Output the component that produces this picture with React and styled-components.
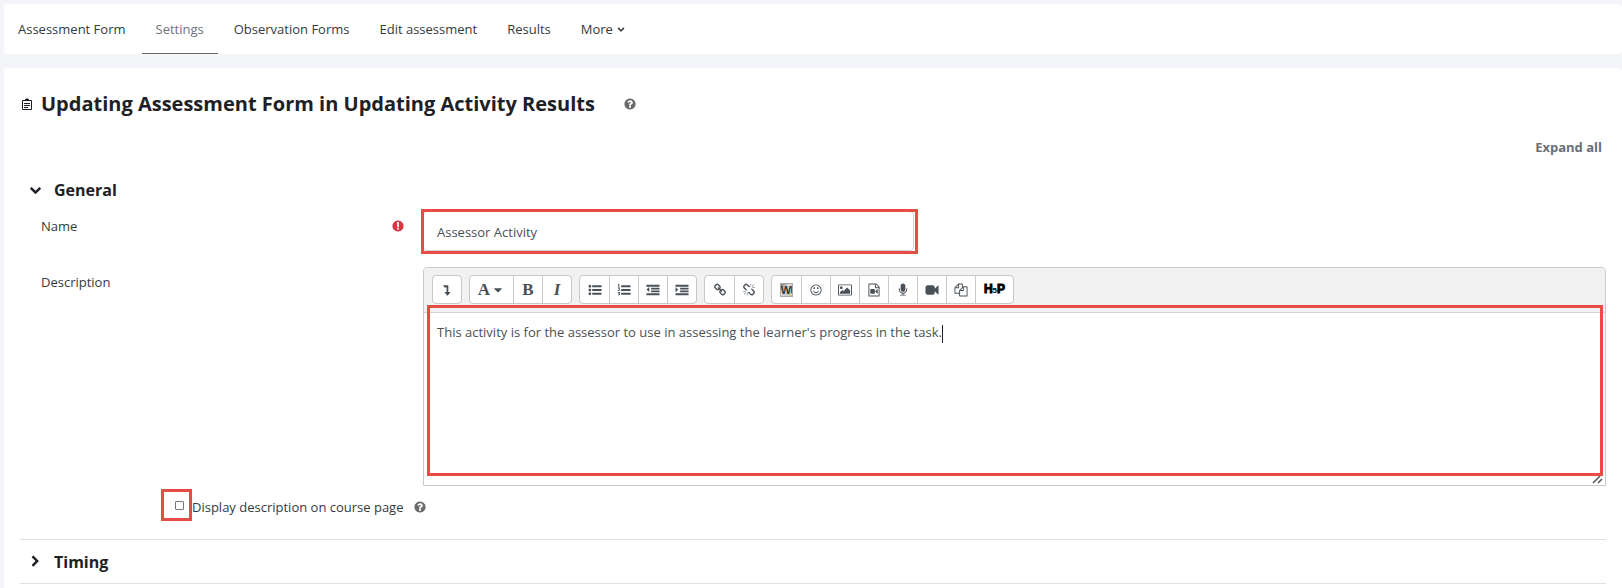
import React, { useState } from "react";
import styled, { createGlobalStyle, css } from "styled-components";

const GlobalStyle = createGlobalStyle`
  * {
    box-sizing: border-box;
  }

  body {
    margin: 0;
    background: #f4f5f8;
    color: #343a40;
    font-family: "Open Sans", "Noto Sans", sans-serif;
    font-size: 13px;
    line-height: 20px;
  }
`;

const Page = styled.div`
  display: flex;
  flex-direction: column;
  gap: 14px;
  min-height: 100vh;
  padding: 4px 0 0 4px;
`;

const TabBar = styled.nav`
  display: flex;
  gap: 2px;
  height: 50px;
  background: #fff;
  border-radius: 4px;
`;

const Tab = styled.a`
  display: flex;
  align-items: center;
  gap: 4px;
  padding: 0 14px;
  border-bottom: 1px solid ${(props) => (props.$active ? "#6a6a6c" : "transparent")};
  color: ${(props) => (props.$active ? "#6f7379" : "#343a40")};
  text-decoration: none;
`;

const Card = styled.main`
  flex: 1;
  padding: 22px 16px 0;
  background: #fff;
  border-radius: 4px 4px 0 0;
`;

const TitleRow = styled.header`
  display: flex;
  align-items: center;
  gap: 8px;
  padding-left: 1px;
`;

const Title = styled.h2`
  margin: 0 20px 0 0;
  color: #1d2125;
  font-size: 20px;
  font-weight: 700;
  line-height: 28px;
`;

const HelpButton = styled.button`
  display: flex;
  padding: 0;
  border: 0;
  background: none;
  color: #6a6a6c;
`;

const ExpandRow = styled.div`
  display: flex;
  justify-content: flex-end;
  padding: 19px 4px 0 0;
`;

const ExpandLink = styled.a`
  color: #6a6f76;
  font-weight: 700;
  text-decoration: none;
`;

const SectionHeader = styled.button`
  display: flex;
  align-items: center;
  gap: 12px;
  width: 100%;
  height: 43px;
  padding: 0 0 0 9px;
  border: 0;
  background: none;
  color: #1d2125;
  font: 700 16px/24px "Open Sans", "Noto Sans", sans-serif;
  text-align: left;
`;

const General = styled.section`
  padding-top: 11px;
`;

const Collapsed = styled.section`
  border: solid #dee2e6;
  border-width: 1px 0;
`;

const FieldRow = styled.div`
  display: grid;
  grid-template-columns: 382px 1fr;
  padding-left: 21px;

  & + & {
    margin-top: 16px;
  }
`;

const LabelCell = styled.div`
  display: flex;
  align-items: center;
  justify-content: space-between;
  align-self: start;
  padding: 5px 18px 0 0;
`;

const Required = styled.span`
  display: flex;
  color: #dc3545;
`;

const highlight = css`
  &::after {
    content: "";
    position: absolute;
    border: 3px solid #e94b45;
    pointer-events: none;
  }
`;

const NameBox = styled.div`
  position: relative;
  width: 491px;
  max-width: 100%;
  ${highlight}

  &::after {
    inset: -2px -4px -3px -2px;
  }
`;

const TextInput = styled.input`
  display: block;
  width: 100%;
  height: 40px;
  padding: 1px 13px 0;
  border: 1px solid #ced4da;
  border-radius: 4px;
  outline: 0;
  color: #495057;
  font: inherit;
`;

const Editor = styled.div`
  border: 1px solid #c8ccd0;
  border-radius: 4px 4px 0 0;
`;

const Toolbar = styled.div`
  display: flex;
  flex-wrap: wrap;
  gap: 7px;
  padding: 7px 8px 8px;
  border-bottom: 1px solid #ced4da;
  border-radius: 3px 3px 0 0;
  background: #f1f1f1;
`;

const ToolGroup = styled.div`
  display: flex;
  border: 1px solid #c8c8c8;
  border-radius: 4px;
  background: #fff;
`;

const Tool = styled.button`
  display: flex;
  align-items: center;
  justify-content: center;
  gap: 1px;
  width: ${(props) => props.$width || 29}px;
  height: 27px;
  padding: 0;
  border: 0;
  background: none;
  color: #495057;

  & + & {
    border-left: 1px solid #c8c8c8;
  }
`;

const Letter = styled.span`
  font-family: "Liberation Serif", serif;
  font-size: 17px;
  font-weight: 700;
  font-style: ${(props) => (props.$italic ? "italic" : "normal")};
`;

const H5P = styled.span`
  color: #000;
  font: 700 12px/12px "Liberation Sans", sans-serif;
  -webkit-text-stroke: 1px #000;

  small {
    font-size: 8px;
    -webkit-text-stroke: 0;
  }
`;

const EditorBody = styled.div`
  position: relative;
  ${highlight}

  &::after {
    inset: -8px 2px 9px 3px;
  }
`;

const TextArea = styled.div`
  min-height: 172px;
  padding: 9px 13px;
  outline: 0;
  color: #495057;
`;

const Caret = styled.span`
  display: inline-block;
  width: 1px;
  height: 18px;
  background: #1d2125;
  vertical-align: middle;
`;

const ResizeGrip = styled.svg`
  position: absolute;
  right: 2px;
  bottom: 1px;
`;

const CheckRow = styled.div`
  display: flex;
  align-items: center;
  gap: 8px;
  padding: 3px 0 18px 141px;
`;

const CheckLabel = styled.label`
  display: flex;
  align-items: center;
`;

const CheckBox = styled.span`
  position: relative;
  display: flex;
  align-items: center;
  width: 31px;
  height: 32px;
  padding-left: 14px;
  ${highlight}

  &::after {
    inset: 0;
  }
`;

const CheckText = styled.span`
  padding-top: 4px;
`;

const CheckHelp = styled(HelpButton)`
  padding: 4px 0 0 2px;
`;

const Check = styled.input`
  appearance: none;
  width: 9px;
  height: 9px;
  margin: 0;
  border: 1px solid #767676;
  border-radius: 1px;
  background: #fff;

  &:checked {
    background: #495057;
  }
`;

const circle =
  "M1664 896q0 209-103 385.500t-279.500 279.500-385.500 103-385.500-103-279.500-279.500-103-385.500 103-385.500 279.500-279.500 385.500-103 385.500 103 279.500 279.500 103 385.500z";

const paths = {
  help: `M1024 1376v-192q0-14-9-23t-23-9h-192q-14 0-23 9t-9 23v192q0 14 9 23t23 9h192q14 0 23-9t9-23zm256-672q0-88-55.500-163t-138.500-116-170-41q-243 0-371 213-15 24 8 42l132 100q7 6 19 6 16 0 25-12 53-68 86-92 34-24 86-24 48 0 85.500 26t37.500 59q0 38-20 61t-68 45q-63 28-115.500 86.500t-52.500 125.500v36q0 14 9 23t23 9h192q14 0 23-9t9-23q0-19 21.500-49.500t54.500-49.500q32-18 49-28.500t46-35 44.500-48 28-60.500 12.500-81z${circle}`,
  required: `M768 340h256l-24 700h-208zM784 1150h224v230h-224z${circle}`,
  chevronDown: "M1683 808l-742 741q-19 19-45 19t-45-19l-742-741q-19-19-19-45.500t19-45.500l166-165q19-19 45-19t45 19l531 531 531-531q19-19 45-19t45 19l166 165q19 19 19 45.500t-19 45.500z",
  chevronRight: "M1363 877l-742 742q-19 19-45 19t-45-19l-166-166q-19-19-19-45t19-45l531-531-531-531q-19-19-19-45t19-45l166-166q19-19 45-19t45 19l742 742q19 19 19 45t-19 45z",
  caret: "M1408 704q0 26-19 45l-448 448q-19 19-45 19t-45-19l-448-448q-19-19-19-45t19-45 45-19h896q26 0 45 19t19 45z",
  levelDown: "M400 256h620q60 0 60 60v860h240q60 0 24 48l-344 440q-40 44-80 0l-344-440q-36-48 24-48h240v-640h-260q-20 0-34-16l-166-212q-20-52 12-52z",
  bullets:
    "M384 1408q0 80-56 136t-136 56-136-56-56-136 56-136 136-56 136 56 56 136zM384 896q0 80-56 136t-136 56-136-56-56-136 56-136 136-56 136 56 56 136zM384 384q0 80-56 136t-136 56-136-56-56-136 56-136 136-56 136 56 56 136zM512 1280h1280v256h-1280zM512 768h1280v256h-1280zM512 256h1280v256h-1280z",
  numbers:
    "M512 1280h1280v256h-1280zM512 768h1280v256h-1280zM512 256h1280v256h-1280zM140 60h110v400h90v80h-290v-80h90v-260l-70 50-50-60zM50 690q60-60 150-60 150 0 150 120 0 80-170 210h180v90h-310v-90q190-150 190-210 0-40-50-40-40 0-90 50zM50 1180h300v80l-90 100q110 20 110 130 0 150-170 150-100 0-160-60l50-80q50 50 110 50 60 0 60-50 0-60-120-60l-20-50 90-120h-160z",
  outdent:
    "M384 544v576q0 32-32 32-14 0-23-9l-288-288q-18-23 0-46l288-288q9-9 23-9 32 0 32 32zM0 1344h1792v256h-1792zM640 960h1152v256h-1152zM640 576h1152v256h-1152zM0 192h1792v256h-1792z",
  indent:
    "M352 832q18 23 0 46l-288 288q-9 9-23 9-32 0-32-32v-576q0-32 32-32 14 0 23 9zM0 1344h1792v256h-1792zM640 960h1152v256h-1152zM640 576h1152v256h-1152zM0 192h1792v256h-1792z",
  link: "M1520 1216q0-40-28-68l-208-208q-28-28-68-28-42 0-72 32 3 3 19 18.500t21.500 21.500 15 19 13 25.500 3.500 27.500q0 40-28 68t-68 28q-15 0-27.500-3.500t-25.500-13-19-15-21.500-21.500-18.500-19q-33 31-33 73 0 40 28 68l206 207q27 27 68 27 40 0 68-26l147-146q28-28 28-67zm-703-705q0-40-28-68l-206-207q-28-28-68-28-39 0-68 27l-147 146q-28 28-28 67 0 40 28 68l208 208q27 27 68 27 42 0 72-31-3-3-19-18.500t-21.500-21.500-15-19-13-25.500-3.500-27.500q0-40 28-68t68-28q15 0 27.500 3.500t25.500 13 19 15 21.500 21.500 18.500 19q33-31 33-73zm895 705q0 120-85 203l-147 146q-83 83-203 83-121 0-204-85l-206-207q-83-83-83-203 0-123 88-209l-88-88q-86 88-208 88-120 0-204-84l-208-208q-84-84-84-204t85-203l147-146q83-83 203-83 121 0 204 85l206 207q83 83 83 203 0 123-88 209l88 88q86-88 208-88 120 0 204 84l208 208q84 84 84 204z",
  unlink:
    "M503 1271l-256 256q-10 9-23 9-12 0-23-9-9-10-9-23t9-23l256-256q10-9 23-9t23 9q9 10 9 23t-9 23zm169 41v320q0 14-9 23t-23 9-23-9-9-23v-320q0-14 9-23t23-9 23 9 9 23zm-224-224q0 14-9 23t-23 9h-320q-14 0-23-9t-9-23 9-23 23-9h320q14 0 23 9t9 23zm1264 128q0 120-85 203l-147 146q-83 83-203 83-121 0-204-85l-334-335q-21-21-42-56l239-18 273 274q28 28 68 27.500t68-27.500l147-146q28-28 28-67 0-40-28-68l-274-275 18-239q35 21 56 42l336 336q84 86 84 204zm-617-724l-239 18-273-274q-28-28-68-28-39 0-68 27l-147 146q-28 28-28 67 0 40 28 68l274 274-18 240q-35-21-56-42l-336-336q-84-86-84-204 0-120 85-203l147-146q83-83 203-83 121 0 204 85l334 335q21 21 42 56zm633 84q0 14-9 23t-23 9h-320q-14 0-23-9t-9-23 9-23 23-9h320q14 0 23 9t9 23zm-544-544v320q0 14-9 23t-23 9-23-9-9-23v-320q0-14 9-23t23-9 23 9 9 23zm407 151l-256 256q-11 9-23 9t-23-9q-9-10-9-23t9-23l256-256q10-9 23-9t23 9q9 10 9 23t-9 23z",
  smile:
    "M1262 1075q-37 121-138 195t-228 74-228-74-138-195q-8-25 4-48.500t38-31.500q25-8 48.500 4t31.500 38q25 80 92.500 129.500t151.500 49.500 151.500-49.500 92.500-129.500q8-26 32-38t49-4 37 31.500 4 48.500zM768 640q0 53-37.500 90.500t-90.500 37.500-90.500-37.500-37.500-90.500 37.500-90.500 90.500-37.500 90.500 37.500 37.500 90.500zM1280 640q0 53-37.500 90.500t-90.500 37.500-90.500-37.500-37.500-90.500 37.500-90.500 90.500-37.500 90.500 37.500 37.500 90.500zM1536 896q0-130-51-248.500t-136.500-204-204-136.500-248.500-51-248.500 51-204 136.500-136.500 204-51 248.500 51 248.500 136.500 204 204 136.500 248.500 51 248.500-51 204-136.500 136.500-204 51-248.500zM1664 896q0 209-103 385.500t-279.500 279.500-385.500 103-385.500-103-279.500-279.500-103-385.500 103-385.500 279.500-279.500 385.500-103 385.500 103 279.500 279.500 103 385.500z",
  image:
    "M576 576q0 80-56 136t-136 56-136-56-56-136 56-136 136-56 136 56 56 136zm1024 384v448h-1408v-192l320-320 160 160 512-512zm96-704h-1600q-13 0-22.500 9.500t-9.500 22.500v1216q0 13 9.500 22.500t22.500 9.500h1600q13 0 22.500-9.500t9.500-22.500v-1216q0-13-9.500-22.500t-22.500-9.500zm160 32v1216q0 66-47 113t-113 47h-1600q-66 0-113-47t-47-113v-1216q0-66 47-113t113-47h1600q66 0 113 47t47 113z",
  fileVideo:
    "M1596 380q28 28 48 76t20 88v1152q0 40-28 68t-68 28h-1344q-40 0-68-28t-28-68v-1600q0-40 28-68t68-28h896q40 0 88 20t76 48zm-444-244v376h376q-10-29-22-41l-313-313q-12-12-41-22zm384 1528v-1024h-416q-40 0-68-28t-28-68v-416h-768v1536h1280zm-640-896q52 0 90 38t38 90v384q0 52-38 90t-90 38h-384q-52 0-90-38t-38-90v-384q0-52 38-90t90-38h384zm492 2q20 8 20 30v576q0 22-20 30-8 2-12 2-14 0-23-9l-265-266v-90l265-266q9-9 23-9 4 0 12 2z",
  microphone:
    "M1472 704v128q0 221-147.500 384.500t-364.500 187.500v132h256q26 0 45 19t19 45-19 45-45 19h-640q-26 0-45-19t-19-45 19-45 45-19h256v-132q-217-24-364.500-187.500t-147.500-384.500v-128q0-26 19-45t45-19 45 19 19 45v128q0 185 131.500 316.500t316.500 131.500 316.500-131.500 131.500-316.500v-128q0-26 19-45t45-19 45 19 19 45zm-256-384v512q0 132-94 226t-226 94-226-94-94-226v-512q0-132 94-226t226-94 226 94 94 226z",
  video:
    "M1792 352v1088q0 42-39 59-13 5-25 5-27 0-45-19l-403-403v166q0 119-84.500 203.500t-203.500 84.500h-704q-119 0-203.500-84.500t-84.500-203.500v-704q0-119 84.500-203.500t203.500-84.500h704q119 0 203.500 84.500t84.500 203.500v165l403-402q18-19 45-19 12 0 25 5 39 17 39 59z",
  files:
    "M1696 384q40 0 68 28t28 68v1216q0 40-28 68t-68 28h-960q-40 0-68-28t-28-68v-288h-544q-40 0-68-28t-28-68v-672q0-40 20-88t48-76l408-408q28-28 76-48t88-20h416q40 0 68 28t28 68v328q68-40 128-40h416zm-544 213l-299 299h299v-299zm-640-384l-299 299h299v-299zm196 647l316-316v-416h-384v416q0 40-28 68t-68 28h-416v640h512v-256q0-40 20-88t48-76zm956 804v-1152h-384v416q0 40-28 68t-68 28h-416v640h896z",
};

const Icon = ({ name, size = 14 }) => (
  <svg width={size} height={size} viewBox="-64 0 1920 1792" fill="currentColor" fillRule={name === "required" || name === "help" ? "evenodd" : "nonzero"} aria-hidden="true">
    <path d={paths[name]} />
  </svg>
);

const ClipboardIcon = () => (
  <svg width="12" height="14" viewBox="0 0 12 14" fill="none" stroke="#1d2125" aria-hidden="true">
    <path d="M1.500 3.500h9v9h-9z" />
    <path d="M4 3h4" strokeWidth="2" />
    <path d="M5 1.500h2" stroke="#888" />
    <path d="M3 6.500h6M3 8.500h6M3 10.500h4" />
  </svg>
);

const WordIcon = () => (
  <svg width="14" height="14" viewBox="0 0 14 14" aria-hidden="true">
    <defs>
      <linearGradient id="paper" x1="0" y1="0" x2="1" y2="1">
        <stop offset="0" stopColor="#666" />
        <stop offset="0.4" stopColor="#ddd" />
        <stop offset="1" stopColor="#bbb" />
      </linearGradient>
    </defs>
    <rect x="0.500" y="0.500" width="12" height="13" fill="url(#paper)" stroke="#aaa" />
    <text x="6" y="11" textAnchor="middle" fontFamily="Liberation Sans, sans-serif" fontWeight="700" fontSize="11" fill="#333">
      W
    </text>
    <path d="M11.500 3v7" stroke="#555" />
  </svg>
);

const tabs = ["Assessment Form", "Settings", "Observation Forms", "Edit assessment", "Results"];

const toolGroups = [
  [{ name: "levelDown", label: "Show more buttons", width: 28 }],
  [
    { label: "Paragraph styles", letter: "A", caret: true, width: 43 },
    { label: "Bold", letter: "B" },
    { label: "Italic", letter: "I", italic: true },
  ],
  [
    { name: "bullets", label: "Unordered list" },
    { name: "numbers", label: "Ordered list" },
    { name: "outdent", label: "Outdent" },
    { name: "indent", label: "Indent" },
  ],
  [
    { name: "link", label: "Link" },
    { name: "unlink", label: "Unlink" },
  ],
  [
    { word: true, label: "Import Word file" },
    { name: "smile", label: "Emoji picker" },
    { name: "image", label: "Insert image" },
    { name: "fileVideo", label: "Insert media" },
    { name: "microphone", label: "Record audio" },
    { name: "video", label: "Record video" },
    { name: "files", label: "Manage files" },
    { h5p: true, label: "Insert H5P", width: 38 },
  ],
];

const ToolButton = ({ tool }) => (
  <Tool type="button" aria-label={tool.label} $width={tool.width}>
    {tool.letter && <Letter $italic={tool.italic}>{tool.letter}</Letter>}
    {tool.name && <Icon name={tool.name} />}
    {tool.caret && <Icon name="caret" />}
    {tool.word && <WordIcon />}
    {tool.h5p && (
      <H5P>
        H<small>5</small>P
      </H5P>
    )}
  </Tool>
);

const App = () => {
  const [name, setName] = useState("Assessor Activity");
  const [showDescription, setShowDescription] = useState(false);

  return (
    <>
      <GlobalStyle />
      <Page>
        <TabBar>
          {tabs.map((tab) => (
            <Tab key={tab} href="#" $active={tab === "Settings"}>
              {tab}
            </Tab>
          ))}
          <Tab href="#">
            More <Icon name="chevronDown" size={8} />
          </Tab>
        </TabBar>

        <Card>
          <TitleRow>
            <ClipboardIcon />
            <Title>Updating Assessment Form in Updating Activity Results</Title>
            <HelpButton type="button" aria-label="Help">
              <Icon name="help" />
            </HelpButton>
          </TitleRow>
          <ExpandRow>
            <ExpandLink href="#">Expand all</ExpandLink>
          </ExpandRow>

          <General>
            <SectionHeader type="button" aria-expanded="true">
              <Icon name="chevronDown" size={13} />
              General
            </SectionHeader>
            <FieldRow>
              <LabelCell>
                <label htmlFor="name">Name</label>
                <Required>
                  <Icon name="required" />
                </Required>
              </LabelCell>
              <NameBox>
                <TextInput id="name" value={name} onChange={(e) => setName(e.target.value)} />
              </NameBox>
            </FieldRow>
            <FieldRow>
              <LabelCell id="description-label">Description</LabelCell>
              <Editor>
                <Toolbar role="toolbar">
                  {toolGroups.map((group, i) => (
                    <ToolGroup key={i}>
                      {group.map((tool) => (
                        <ToolButton key={tool.label} tool={tool} />
                      ))}
                    </ToolGroup>
                  ))}
                </Toolbar>
                <EditorBody>
                  <TextArea role="textbox" aria-labelledby="description-label" contentEditable suppressContentEditableWarning>
                    This activity is for the assessor to use in assessing the learner's progress in the task.
                    <Caret />
                  </TextArea>
                  <ResizeGrip width="11" height="9" viewBox="0 0 11 9" stroke="#555" strokeWidth="1.500">
                    <path d="M1 8l7-7M6 8l4-4" />
                  </ResizeGrip>
                </EditorBody>
              </Editor>
            </FieldRow>
            <CheckRow>
              <CheckLabel>
                <CheckBox>
                  <Check type="checkbox" checked={showDescription} onChange={(e) => setShowDescription(e.target.checked)} />
                </CheckBox>
                <CheckText>Display description on course page</CheckText>
              </CheckLabel>
              <CheckHelp type="button" aria-label="Help">
                <Icon name="help" />
              </CheckHelp>
            </CheckRow>
          </General>

          <Collapsed>
            <SectionHeader type="button" aria-expanded="false">
              <Icon name="chevronRight" size={13} />
              Timing
            </SectionHeader>
          </Collapsed>
        </Card>
      </Page>
    </>
  );
};

export default App;
